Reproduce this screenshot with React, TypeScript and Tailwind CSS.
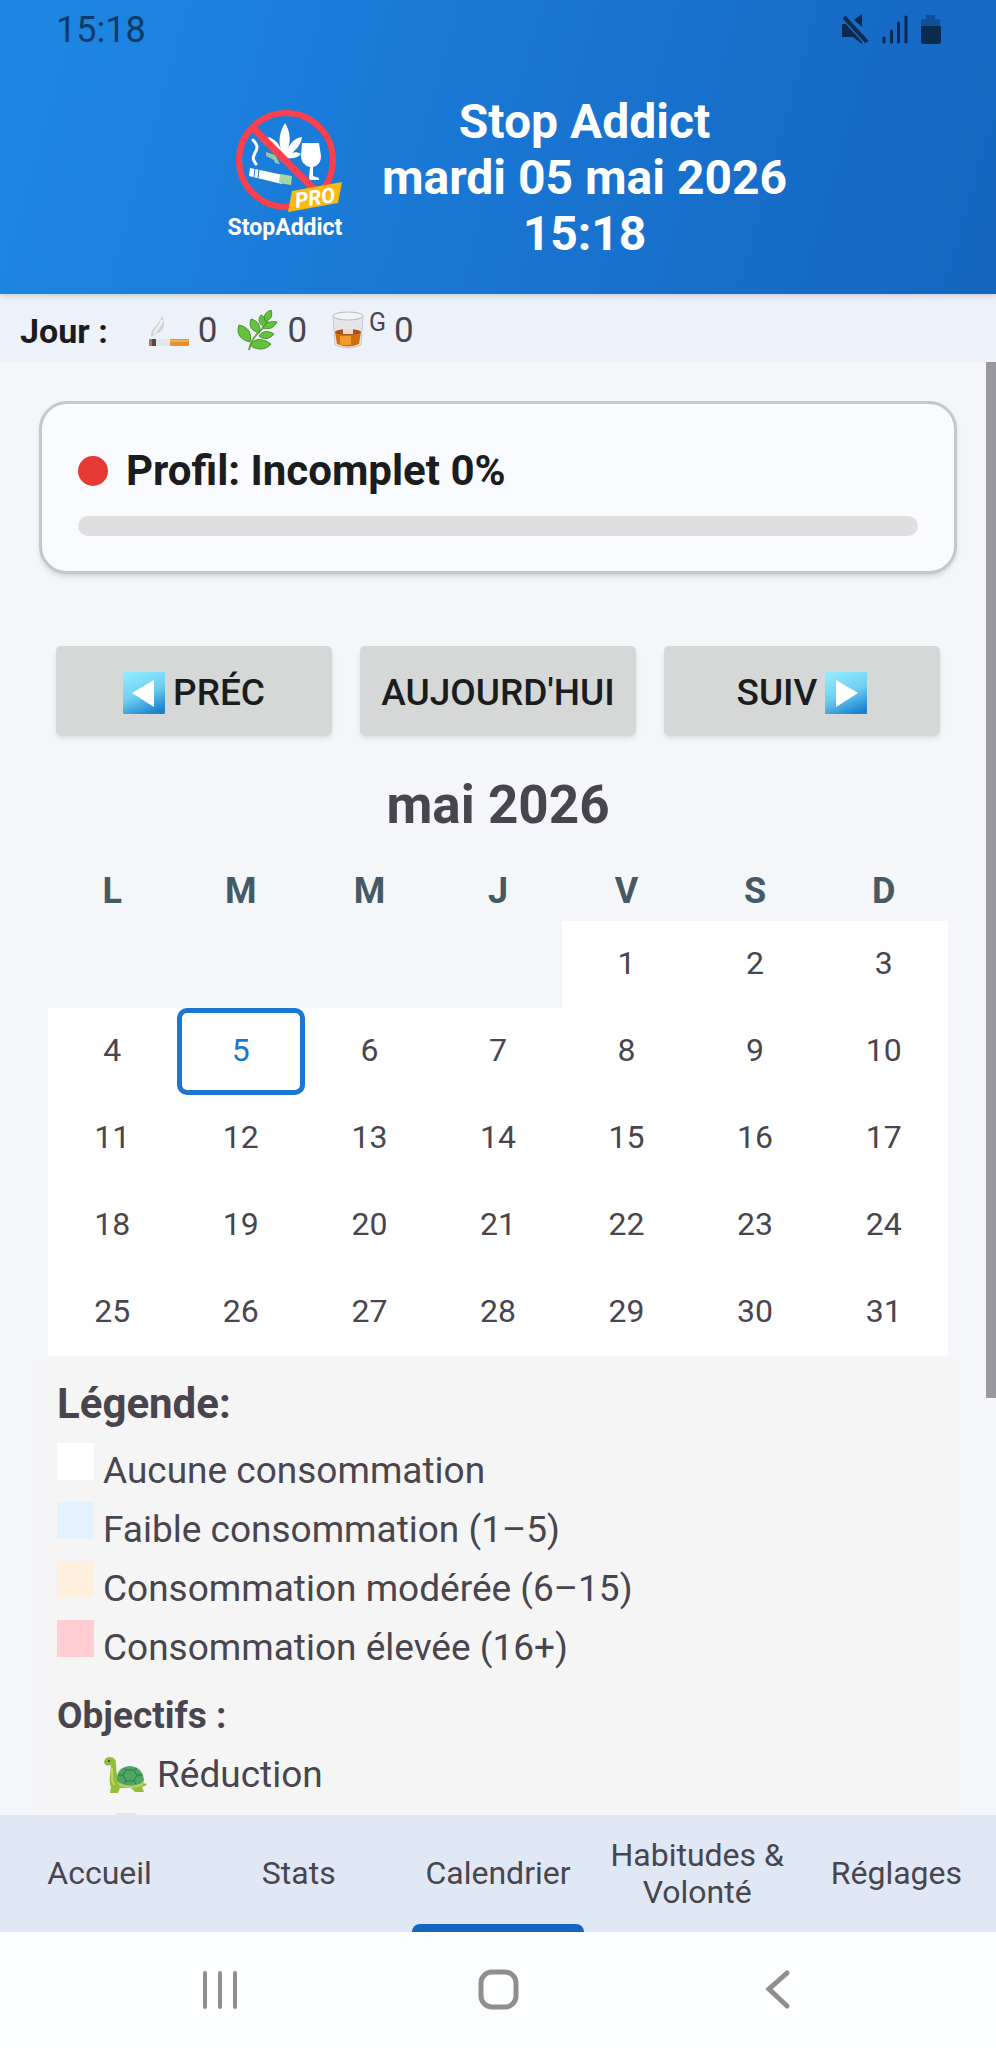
import { useState } from "react";

const WEEKDAYS = ["L", "M", "M", "J", "V", "S", "D"];
const FIRST_DAY_OFFSET = 4;
const TODAY = 5;

const WEEKS = Array.from({ length: 5 }, (_, week) =>
  Array.from({ length: 7 }, (_, day) => week * 7 + day + 1 - FIRST_DAY_OFFSET)
);

const LEGEND = [
  { label: "Aucune consommation", color: "bg-white" },
  { label: "Faible consommation (1–5)", color: "bg-[#e3f2fd]" },
  { label: "Consommation modérée (6–15)", color: "bg-[#fff0de]" },
  { label: "Consommation élevée (16+)", color: "bg-[#ffcdd2]" },
];

const TABS = ["Accueil", "Stats", "Calendrier", "Habitudes & Volonté", "Réglages"];

function StatusIcons() {
  return (
    <svg width="100" height="32" viewBox="0 0 100 32" fill="#0a2a50" aria-hidden="true">
      <path d="M0 10h7l13 12v8l-9-7H0z" />
      <path d="M12 6l8-6v13z" />
      <path d="M2 3l23 25" stroke="#1869c6" strokeWidth="7" fill="none" />
      <path d="M2 3l23 25" stroke="#0a2a50" strokeWidth="4" fill="none" />
      <path
        d="M42 24v4M49.500 17v11M56.500 9v19M64 3v25"
        stroke="#0a2a50"
        strokeWidth="3"
        strokeLinecap="round"
      />
      <path d="M79 7q0-2 2-2h3V1h9v4h3q2 0 2 2v7H79z" fill="#11509c" />
      <path d="M79 12h20v16q0 2-2 2H81q-2 0-2-2z" />
    </svg>
  );
}

function Logo() {
  return (
    <svg width="120" height="136" viewBox="0 0 120 136" aria-label="StopAddict Pro">
      <g fill="#fff">
        <path d="M60 13c5 8 6 17 3 26 3-7 7-11 14-12-1 7-5 12-10 16 3-1 6-1 9 1-3 4-9 5-14 4l-6-6c-7-4-11-8-13-15 7 2 11 6 13 13-3-10-1-19 4-27z" />
        <path d="M77 33h17l2 13q0 9-8 11v9l6 2v2H85l-1-2 1-11q-9-2-9-11z" />
        <path d="M25 58l33 7-1 9-33-8z" />
      </g>
      <path d="M55 64l12 2-1 9-12-2z" fill="#a5d6a7" />
      <path d="M41 42l9 3 5 9-5-1-1-3-8-4z" fill="#8fc9a8" />
      <path d="M30 58l-1 9M34 59l-1 9" stroke="#1d7cd9" strokeWidth="1" />
      <path d="M28 30c6 6 4 9 2 13s-3 6 1 11" stroke="#fff" strokeWidth="3" fill="none" strokeLinecap="round" />
      <circle cx="61" cy="50" r="47" fill="none" stroke="#ff3f4b" strokeWidth="6" />
      <path d="M28 18l66 66" stroke="#ff3f4b" strokeWidth="7" />
      <path d="M67 81l50-9-4 21-50 9z" fill="#f9b90e" />
      <text
        x="90"
        y="95"
        textAnchor="middle"
        fontSize="21"
        fontWeight="800"
        fontStyle="italic"
        fill="#fff"
        fontFamily="Roboto, sans-serif"
        transform="rotate(-9 90 88)"
      >
        PRO
      </text>
      <text x="60" y="125" textAnchor="middle" fontSize="23" fontWeight="700" fill="#fff" fontFamily="Roboto, sans-serif">
        StopAddict
      </text>
    </svg>
  );
}

function CigaretteIcon() {
  return (
    <svg width="42" height="42" viewBox="0 0 42 42" aria-hidden="true">
      <path d="M4 28c-4-8 7-12 10-23 3 8 3 14-2 17-5 2-7 3-8 6z" fill="#d3d4d7" />
      <path d="M6 24c2-6 7-7 8-14" stroke="#f4f4f5" strokeWidth="2" fill="none" />
      <rect x="1" y="29" width="5" height="7" rx="1" fill="#c06a52" />
      <rect x="4" y="29" width="4" height="7" fill="#504a4a" />
      <rect x="8" y="29" width="14" height="7" fill="#e6e6e6" />
      <rect x="22" y="29" width="19" height="7" rx="1" fill="#e2932c" />
      <path d="M22 31h18" stroke="#f2b055" strokeWidth="2" />
    </svg>
  );
}

function HerbIcon() {
  return (
    <svg width="42" height="42" viewBox="0 0 42 42" aria-hidden="true">
      <path d="M12 40q2-10 9-17t10-12" stroke="#6fa544" strokeWidth="2" fill="none" />
      <g fill="#66c23e" stroke="#439428" strokeWidth="1">
        <path d="M13 32C3 30-1 23 2 15c10 2 13 9 11 17z" />
        <path d="M22 23c-9-3-10-8-8-14 8 2 10 8 8 14z" />
        <path d="M27 17c-6-4-6-8-3-12 6 3 6 8 3 12z" />
        <path d="M28 11c-2-6 1-9 6-11 2 6 0 10-6 11z" />
        <path d="M26 18c3-6 8-7 14-6-3 6-8 8-14 6z" />
        <path d="M22 26c4-6 10-5 15-2-4 5-10 6-15 2z" />
        <path d="M13 35c5-8 14-6 21-1-6 7-15 6-21 1z" />
      </g>
    </svg>
  );
}

function GlassIcon() {
  return (
    <svg width="34" height="42" viewBox="0 0 34 42" aria-hidden="true">
      <path d="M2 6l2 29q13 6 26 0l2-29z" fill="#e4e5e7" stroke="#c8cace" />
      <path d="M4 22q13 4 26 0l-2 12q-11 5-22 0z" fill="#cf6f10" />
      <path d="M9 26h11v9H9z" fill="#f09a2c" />
      <ellipse cx="17" cy="22" rx="13" ry="3" fill="#a7501c" />
      <path d="M12 19h10v5H12z" fill="#ead9ce" />
      <ellipse cx="17" cy="6" rx="15" ry="4" fill="#f2f3f4" stroke="#b9bbbf" />
    </svg>
  );
}

function TurtleIcon() {
  return (
    <svg width="44" height="38" viewBox="0 0 44 38" aria-hidden="true">
      <path
        d="M1 6q1-5 6-5 6 0 6 7 0 8 2 14l6 6 18-2q3 2 5 2-2 3-5 3l2 5h-9l-4-4H17l-2 5H7l1-6q-2-4-1-12l1-10Q2 11 1 6z"
        fill="#93bd3c"
      />
      <path d="M14 25q-1-14 13-15 13 1 14 15-12 9-27 0z" fill="#4fa564" />
      <path d="M14 26q13 8 27 0l-2 4q-11 4-22 0z" fill="#b9d26b" />
      <path
        d="M23 14h8l3 5-3 6h-8l-3-6zM23 14l-2-2M31 14l3-2M20 19h-5M34 19h6M23 25l-2 3M31 25l2 3"
        fill="none"
        stroke="#2c7a45"
        strokeWidth="1"
      />
      <path d="M9 12v9q0 6 3 8" stroke="#bcd861" strokeWidth="2" fill="none" />
      <circle cx="6" cy="5" r="1" fill="#2e3b12" />
    </svg>
  );
}

function ArrowTile({ direction }: { direction: "left" | "right" }) {
  return (
    <svg width="42" height="42" viewBox="0 0 42 42" aria-hidden="true">
      <defs>
        <linearGradient id={`tile-${direction}`} x1="0.3" y1="0" x2="0.7" y2="1">
          <stop offset="0" stopColor="#8fe9fd" />
          <stop offset="0.5" stopColor="#6fcff2" />
          <stop offset="1" stopColor="#1b82cb" />
        </linearGradient>
      </defs>
      <rect width="42" height="42" rx="1" fill={`url(#tile-${direction})`} />
      <path d={direction === "left" ? "M9 21L31 8v27z" : "M33 21L11 8v27z"} fill="#fff" />
    </svg>
  );
}

export default function App() {
  const [activeTab, setActiveTab] = useState("Calendrier");

  return (
    <div className="flex h-screen flex-col overflow-hidden bg-[#f4f6fa] font-[Roboto,sans-serif] text-[#49454f]">
      <header className="relative z-10 bg-linear-[106deg] from-[#1e88e5] via-[#1976d2] to-[#1565c0] pb-8 shadow-md">
        <div className="flex h-[60px] items-center justify-between pr-[54px] pl-14 text-[#0d3a66]">
          <span className="text-[36px] leading-none">15:18</span>
          <StatusIcons />
        </div>
        <div className="flex items-center justify-center gap-[37px] pt-[34px] pl-4">
          <Logo />
          <h1 className="text-center text-[48px] leading-[56px] font-bold text-white">
            Stop Addict
            <br />
            mardi 05 mai 2026
            <br />
            15:18
          </h1>
        </div>
      </header>

      <div className="flex h-[68px] shrink-0 items-center bg-[#edf2fa] pt-[6px] pl-5 text-[35px]">
        <span className="text-[34px] font-bold text-[#1a1c1e]">Jour :</span>
        <span className="ml-10 flex items-center gap-2">
          <CigaretteIcon /> 0
        </span>
        <span className="ml-5 flex items-center gap-2">
          <HerbIcon /> 0
        </span>
        <span className="ml-6 flex items-center gap-1">
          <GlassIcon />
          <span className="pb-4 text-[25px]">G</span>
          <span className="ml-1">0</span>
        </span>
      </div>

      <main className="relative min-h-0 flex-1 overflow-hidden px-[39px] pt-[39px]">
        <div className="absolute top-0 right-0 h-[1036px] w-[10px] bg-[#9a989f]" />

        <section className="h-[173px] rounded-[28px] border-3 border-[#c5c6d0] bg-[#fafbfe] px-9 pt-[42px] shadow-md">
          <div className="flex items-center gap-[18px]">
            <span className="size-[30px] rounded-full bg-[#e53935]" />
            <h2 className="text-[42px] leading-[50px] font-bold text-[#1a1c1e]">Profil: Incomplet 0%</h2>
          </div>
          <div className="mt-5 h-5 rounded-full bg-[#dfdfdf]" role="progressbar" aria-valuenow={0} aria-label="Profil" />
        </section>

        <div className="mt-[72px] grid grid-cols-3 gap-7 px-[17px] text-[37px] font-medium text-[#1a1c1e]">
          <button className="flex h-[89px] items-center justify-center gap-2 rounded-[5px] bg-[#d6d8d7] pt-1 shadow-md">
            <ArrowTile direction="left" /> PRÉC
          </button>
          <button className="h-[89px] rounded-[5px] bg-[#d6d8d7] pt-1 shadow-md">AUJOURD'HUI</button>
          <button className="flex h-[89px] items-center justify-center gap-2 rounded-[5px] bg-[#d6d8d7] pt-1 shadow-md">
            SUIV <ArrowTile direction="right" />
          </button>
        </div>

        <h2 className="mt-[38px] text-center text-[53px] leading-[64px] font-bold">mai 2026</h2>

        <div className="mt-6 px-[9px]">
          <table className="w-full table-fixed text-center text-[32px]">
            <thead>
              <tr className="h-[60px] text-[36px] text-[#455a64]">
                {WEEKDAYS.map((day, i) => (
                  <th key={i} className="font-bold">
                    {day}
                  </th>
                ))}
              </tr>
            </thead>
            <tbody>
              {WEEKS.map((week, i) => (
                <tr key={i} className="h-[87px]">
                  {week.map((day) => (
                    <td key={day} className={day > 0 ? "bg-white p-0" : ""}>
                      {day > 0 && (
                        <button
                          className={
                            day === TODAY
                              ? "block h-[87px] w-full rounded-[10px] border-5 border-[#1976d2] pb-1 text-[#1976d2]"
                              : "block h-[87px] w-full pb-1"
                          }
                        >
                          {day}
                        </button>
                      )}
                    </td>
                  ))}
                </tr>
              ))}
            </tbody>
          </table>
        </div>

        <section className="mt-[7px] bg-[#f5f5f5] px-[18px] pt-4 text-[37px]">
          <h3 className="text-[42px] leading-[50px] font-bold">Légende:</h3>
          <ul className="mt-3">
            {LEGEND.map((item) => (
              <li key={item.label} className="flex h-[59px] gap-[9px]">
                <span className={`mt-0.5 size-[37px] ${item.color}`} />
                <span className="pt-1 leading-[52px]">{item.label}</span>
              </li>
            ))}
          </ul>
          <h3 className="mt-[14px] leading-[50px] font-bold">Objectifs :</h3>
          <ul className="mt-1 pl-[46px]">
            <li className="flex h-[60px] items-center gap-[10px]">
              <TurtleIcon /> Réduction
            </li>
            <li className="pt-2 pl-3">
              <div className="h-10 w-[22px] rounded-t-[4px] border-3 border-[#e4e4e4]" />
            </li>
          </ul>
        </section>
      </main>

      <nav className="z-10 grid h-[117px] shrink-0 grid-cols-5 bg-[#dfe8f4] text-[32px] leading-[37px]">
        {TABS.map((tab) => (
          <button
            key={tab}
            onClick={() => setActiveTab(tab)}
            className="relative flex items-center justify-center px-3"
          >
            {tab}
            {tab === activeTab && (
              <span className="absolute inset-x-[14px] bottom-0 h-2 rounded-t-[8px] bg-[#1565c0]" />
            )}
          </button>
        ))}
      </nav>

      <div className="flex h-[116px] shrink-0 items-center justify-around bg-[#fcfdff] px-20 text-[#8e8f8e]">
        <button aria-label="Applications récentes">
          <svg width="42" height="42" viewBox="0 0 42 42" fill="none" stroke="currentColor" strokeWidth="4" strokeLinecap="round">
            <path d="M7 4v34M22 4v34M37 4v34" />
          </svg>
        </button>
        <button aria-label="Écran d'accueil">
          <svg width="42" height="42" viewBox="0 0 42 42" fill="none" stroke="currentColor" strokeWidth="5">
            <rect x="4" y="3" width="35" height="35" rx="11" />
          </svg>
        </button>
        <button aria-label="Retour">
          <svg width="42" height="42" viewBox="0 0 42 42" fill="none" stroke="currentColor" strokeWidth="5" strokeLinecap="round">
            <path d="M31 4L13 20l18 17" />
          </svg>
        </button>
      </div>
    </div>
  );
}
